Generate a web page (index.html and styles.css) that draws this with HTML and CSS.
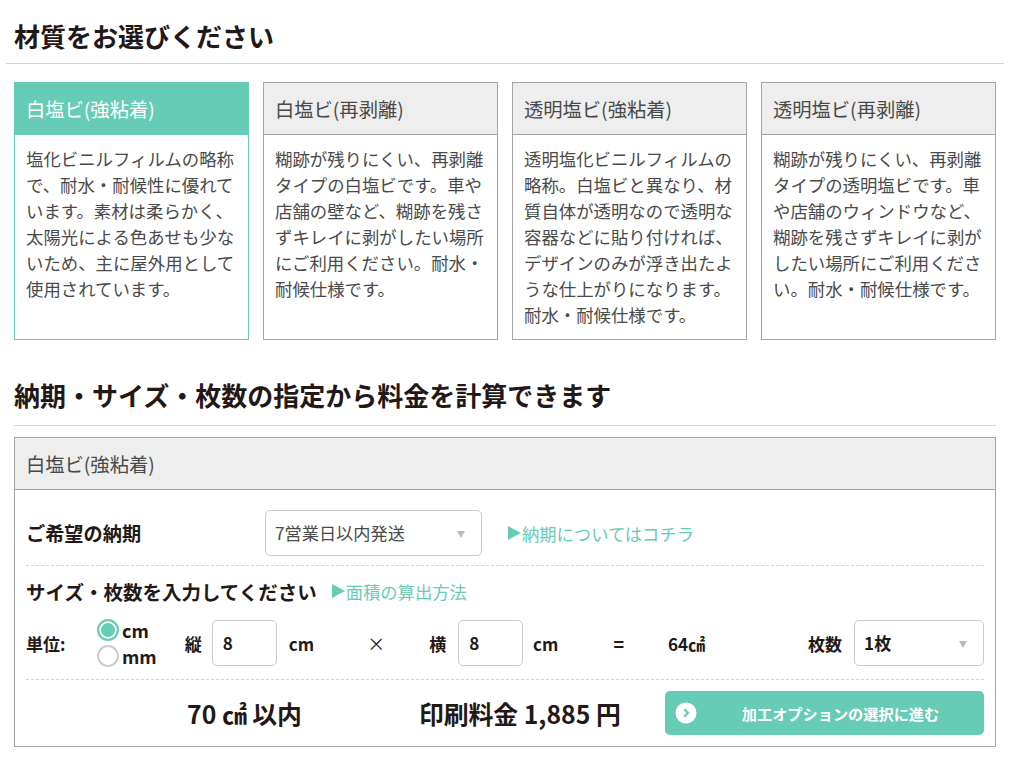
FILE: index.html
```html
<!DOCTYPE html>
<html lang="ja">
<head>
<meta charset="utf-8">
<title>材質をお選びください</title>
<link rel="stylesheet" href="styles.css">
</head>
<body>
<h2 class="title title-first">材質をお選びください</h2>
<div class="cards">
  <div class="card active">
    <div class="card-head">白塩ビ(強粘着)</div>
    <p class="card-body">塩化ビニルフィルムの略称で、耐水・耐候性に優れています。素材は柔らかく、太陽光による色あせも少ないため、主に屋外用として使用されています。</p>
  </div>
  <div class="card">
    <div class="card-head">白塩ビ(再剥離)</div>
    <p class="card-body">糊跡が残りにくい、再剥離タイプの白塩ビです。車や店舗の壁など、糊跡を残さずキレイに剥がしたい場所にご利用ください。耐水・耐候仕様です。</p>
  </div>
  <div class="card">
    <div class="card-head">透明塩ビ(強粘着)</div>
    <p class="card-body">透明塩化ビニルフィルムの略称。白塩ビと異なり、材質自体が透明なので透明な容器などに貼り付ければ、デザインのみが浮き出たような仕上がりになります。耐水・耐候仕様です。</p>
  </div>
  <div class="card">
    <div class="card-head">透明塩ビ(再剥離)</div>
    <p class="card-body">糊跡が残りにくい、再剥離タイプの透明塩ビです。車や店舗のウィンドウなど、糊跡を残さずキレイに剥がしたい場所にご利用ください。耐水・耐候仕様です。</p>
  </div>
</div>
<h2 class="title title-second">納期・サイズ・枚数の指定から料金を計算できます</h2>
<section class="panel">
  <div class="panel-head">白塩ビ(強粘着)</div>
  <div class="panel-body">
    <div class="row-date">
      <span class="label-date">ご希望の納期</span>
      <div class="select select-date">7営業日以内発送<span class="caret"></span></div>
      <a class="link link-date"><span class="tri"></span>納期についてはコチラ</a>
    </div>
    <div class="row-size-title">
      <span class="label-size">サイズ・枚数を入力してください</span>
      <a class="link"><span class="tri"></span>面積の算出方法</a>
    </div>
    <div class="row-size">
      <span class="unit-label">単位:</span>
      <div class="units">
        <div class="unit"><span class="radio on"></span>cm</div>
        <div class="unit"><span class="radio"></span>mm</div>
      </div>
      <span class="dim dim-h">縦</span>
      <div class="input">8</div>
      <span class="cm cm-h">cm</span>
      <span class="op op-x">×</span>
      <span class="dim dim-w">横</span>
      <div class="input">8</div>
      <span class="cm cm-w">cm</span>
      <span class="op op-eq">=</span>
      <span class="area">64㎠</span>
      <span class="dim dim-q">枚数</span>
      <div class="select select-qty">1枚<span class="caret"></span></div>
    </div>
    <div class="row-total">
      <span class="within">70 ㎠ 以内</span>
      <span class="price">印刷料金 1,885 円</span>
      <a class="next">
        <svg class="next-icon" width="22" height="22" viewBox="0 0 22 22"><circle cx="11" cy="11" r="10.5" fill="#fff"/><path d="M9.2 7.2 13 11l-3.8 3.8" fill="none" stroke="#66ccb6" stroke-width="2.2"/></svg>
        <span class="next-text">加工オプションの選択に進む</span>
      </a>
    </div>
  </div>
</section>
</body>
</html>
```
FILE: styles.css
```css
* { box-sizing: border-box; }
html, body { margin: 0; padding: 0; background: #fff; }
body {
  width: 1024px;
  height: 779px;
  overflow: hidden;
  padding: 0 14px;
  color: #231815;
  font-family: "Noto Sans CJK JP", "Noto Sans", sans-serif;
}
.title {
  margin: 0;
  font-size: 26px;
  font-weight: 700;
  line-height: 38px;
  border-bottom: 1px solid #d4d4d4;
}
.title-first {
  margin: 0 6px 18px -8px;
  padding: 17px 0 8px 8px;
  height: 64px;
}
.title-second {
  margin: 36px 14px 11px 0;
  padding: 0;
  height: 50px;
}
.cards { display: flex; gap: 14px; height: 258px; }
.card {
  width: 235px;
  border: 1px solid #a5a5a5;
  display: flex;
  flex-direction: column;
}
.card-head {
  height: 52px;
  padding-left: 11px;
  font-size: 19.3px;
  line-height: 52px;
  color: #4a4a4a;
  background: #eee;
  border-bottom: 1px solid #a5a5a5;
  white-space: nowrap;
}
.card-body {
  margin: 0;
  padding: 11px 11px 0;
  font-size: 17.4px;
  line-height: 26px;
  color: #4a4a4a;
}
.card.active { border-color: #66ccb6; }
.card.active .card-head {
  background: #66ccb6;
  border-bottom-color: #66ccb6;
  color: #fff;
}
.panel {
  width: 982px;
  height: 310px;
  border: 1px solid #a5a5a5;
}
.panel-head {
  height: 52px;
  padding-left: 11px;
  font-size: 19.3px;
  line-height: 52px;
  color: #4a4a4a;
  background: #eee;
  border-bottom: 1px solid #a5a5a5;
}
.panel-body { padding: 0 11px; }
.row-date {
  height: 76px;
  padding-top: 11px;
  display: flex;
  align-items: center;
  border-bottom: 1px dashed #d4d4d4;
}
.label-date { width: 239px; font-size: 19.2px; font-weight: 700; }
.label-size { font-size: 19.5px; font-weight: 700; }
.select {
  position: relative;
  height: 46px;
  border: 1px solid #ccc;
  border-radius: 5px;
  line-height: 44px;
  padding-left: 9px;
  background: #fff;
}
.select-date { width: 217px; font-size: 17.2px; color: #4a4a4a; }
.select-qty { width: 130px; font-size: 17px; font-weight: 700; }
.caret {
  position: absolute;
  right: 16px;
  top: 20px;
  border-left: 4px solid transparent;
  border-right: 4px solid transparent;
  border-top: 7px solid #bbb;
}
.link {
  display: flex;
  align-items: center;
  font-size: 17.3px;
  color: #66ccb6;
}
.link-date { margin-left: 26px; }
.tri {
  width: 0;
  height: 0;
  margin-right: 1px;
  border-top: 7.5px solid transparent;
  border-bottom: 7.5px solid transparent;
  border-left: 13px solid #66ccb6;
}
.row-size-title {
  height: 52px;
  padding-bottom: 2px;
  display: flex;
  align-items: center;
  gap: 15px;
}
.row-size {
  height: 62px;
  padding-bottom: 11px;
  display: flex;
  align-items: center;
  font-size: 17px;
  font-weight: 700;
  white-space: nowrap;
  border-bottom: 1px dashed #d4d4d4;
}
.unit-label { width: 71px; }
.units { width: 88px; }
.unit {
  display: flex;
  align-items: center;
  gap: 3px;
  height: 26px;
  font-size: 18px;
  line-height: 26px;
}
.radio {
  width: 22px;
  height: 22px;
  border: 2px solid #ccc;
  border-radius: 50%;
  background: #fff;
}
.radio.on {
  border-color: #66ccb6;
  background: #66ccb6;
  box-shadow: inset 0 0 0 2px #fff;
}
.dim-h { margin-right: 10px; }
.dim-w { margin-left: 44px; margin-right: 12px; }
.dim-q { margin-left: 103px; margin-right: 12px; }
.input {
  width: 65px;
  height: 46px;
  padding-left: 10px;
  border: 1px solid #ccc;
  border-radius: 5px;
  line-height: 44px;
}
.cm-h { margin-left: 12px; }
.cm-w { margin-left: 10px; }
.op { font-weight: 400; font-size: 18px; }
.op-x { margin-left: 53px; }
.op-eq { margin-left: 55px; font-weight: 700; }
.area { margin-left: 44px; }
.row-total {
  height: 65px;
  display: flex;
  align-items: center;
  font-weight: 700;
  font-size: 24.8px;
}
.within { margin-left: 161px; }
.price { margin-left: 117px; }
.next {
  position: relative;
  margin-left: auto;
  width: 319px;
  height: 44px;
  background: #66ccb6;
  border-radius: 5px;
  color: #fff;
  font-size: 15.2px;
  line-height: 44px;
  text-align: center;
}
.next-icon { position: absolute; left: 10px; top: 11px; }
.next-text { margin-left: 32px; }
```
